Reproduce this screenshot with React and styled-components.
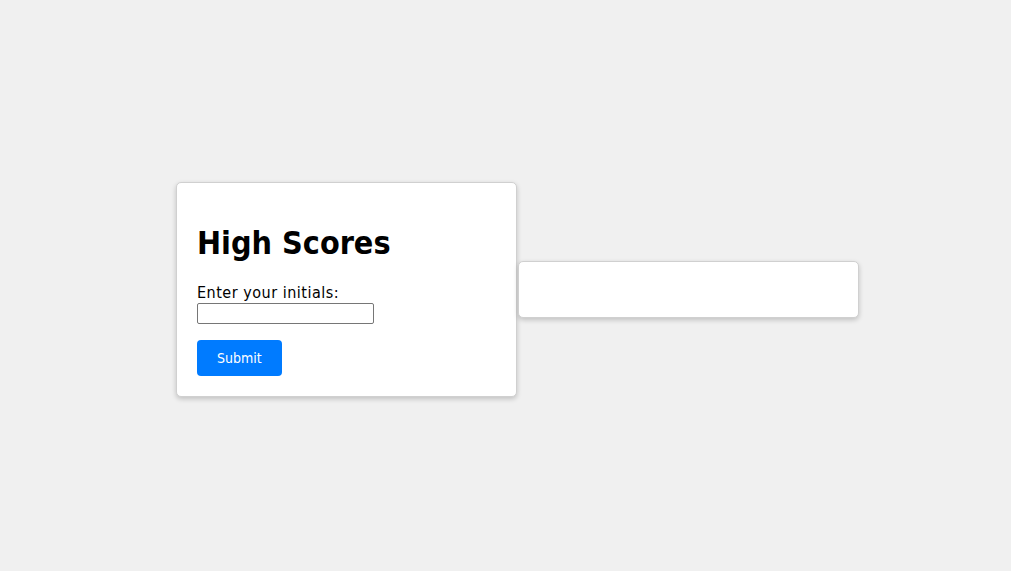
import React from "react";
import styled, { createGlobalStyle } from "styled-components";

const GlobalStyle = createGlobalStyle`
  html, body {
    margin: 0;
    padding: 0;
    background: #f0f0f0;
    font-family: "DejaVu Sans Condensed", "DejaVu Sans", sans-serif;
    font-stretch: condensed;
    color: #000;
  }
  * { box-sizing: border-box; }
`;

const Page = styled.div`
  min-height: 100vh;
  display: flex;
  justify-content: center;
  align-items: center;
  gap: 1px;
  padding: 7px 0 0 24px;
`;

const Card = styled.div`
  width: 341px;
  background: #fff;
  border: 1px solid #d0d0d0;
  border-radius: 5px;
  box-shadow: 0 2px 5px rgba(0, 0, 0, 0.2);
  padding: 20px;
  min-height: ${(p) => p.$minHeight || "auto"};
`;

const Title = styled.h1`
  font-size: 32px;
  font-weight: bold;
  margin: 22px 0 21px;
  line-height: 37px;
`;

const Form = styled.form`
  display: flex;
  flex-direction: column;
  align-items: flex-start;
`;

const Label = styled.label`
  font-size: 16px;
  line-height: 19px;
  letter-spacing: 0.5px;
`;

const Input = styled.input`
  margin-top: 1px;
  width: 177px;
  height: 21px;
  border: 1px solid #767676;
  border-radius: 2px;
  padding: 1px 2px;
  font-size: 13px;
  background: #fff;
`;

const Button = styled.button`
  margin-top: 16px;
  background: #007bff;
  color: #fff;
  border: none;
  border-radius: 4px;
  padding: 10px 20px;
  height: 36px;
  font-family: inherit;
  font-stretch: condensed;
  font-size: 14px;
  font-weight: normal;
  cursor: pointer;
`;

export default function App() {
  return (
    <>
      <GlobalStyle />
      <Page>
        <Card>
          <Title>High Scores</Title>
          <Form onSubmit={(e) => e.preventDefault()}>
            <Label htmlFor="initials">Enter your initials:</Label>
            <Input id="initials" type="text" />
            <Button type="submit">Submit</Button>
          </Form>
        </Card>
        <Card $minHeight="57px" />
      </Page>
    </>
  );
}
